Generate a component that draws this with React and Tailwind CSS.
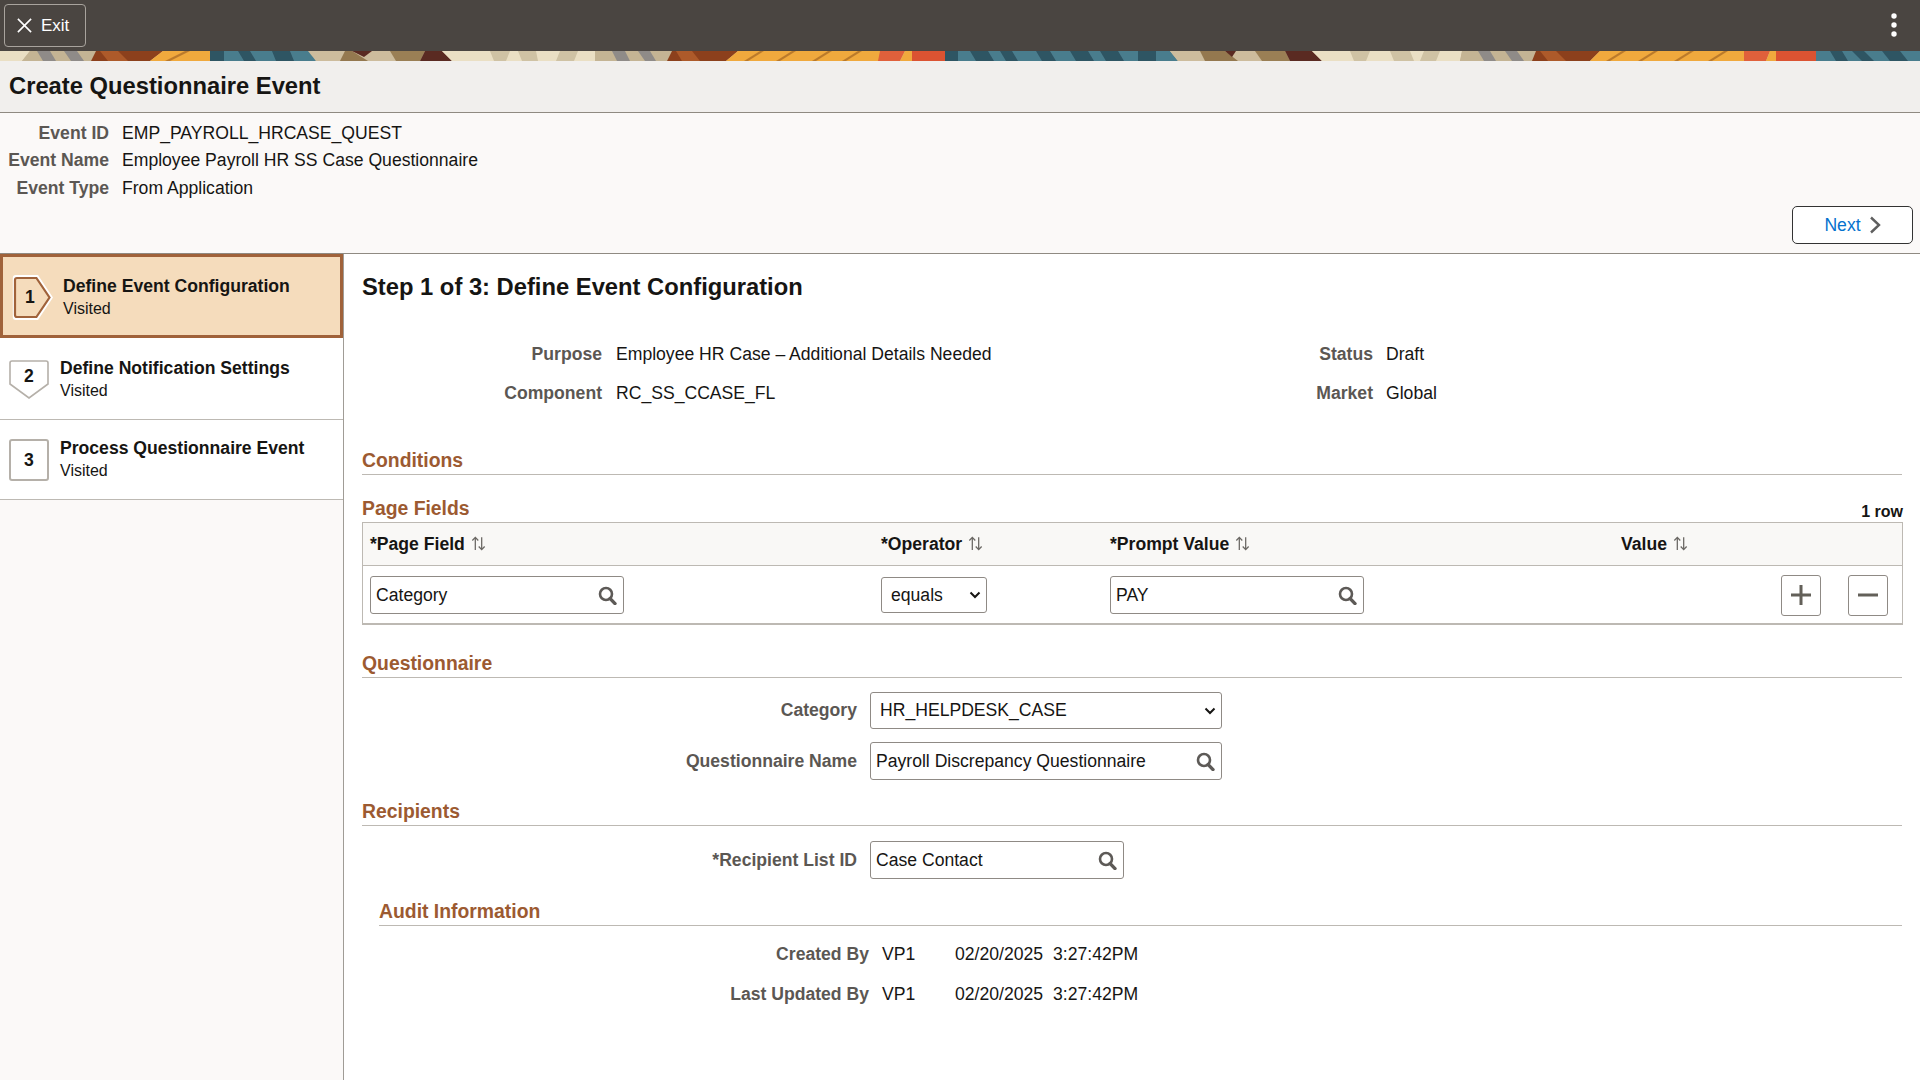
import React from "react";

const bannerShapes = [
  ["0,0 30,0 22,10 0,10", "#eadfc4"],
  ["30,0 96,0 91,10 22,10", "#c4b494"],
  ["37,0 50,0 56,10 43,10", "#8f8b88"],
  ["64,0 77,0 84,10 71,10", "#8f8b88"],
  ["96,0 163,0 150,10 91,10", "#8c401c"],
  ["100,0 118,0 128,10 108,10", "#ad5a2a"],
  ["163,0 210,0 210,10 150,10", "#f0a93c"],
  ["185,0 190,0 170,10 165,10", "#bb7a2c"],
  ["210,0 312,0 316,10 210,10", "#4a7d8d"],
  ["210,0 224,0 224,10 210,10", "#2f5563"],
  ["238,0 250,0 256,10 244,10", "#2f5563"],
  ["272,0 290,0 294,10 276,10", "#2f5563"],
  ["308,0 345,0 340,10 316,10", "#cdbc9d"],
  ["345,0 390,0 396,10 340,10", "#cdbc9d"],
  ["345,0 352,0 368,10 340,10", "#94784f"],
  ["352,0 372,0 364,6", "#5a2a22"],
  ["390,0 425,0 420,10 396,10", "#9a7f55"],
  ["425,0 442,0 452,10 420,10", "#5a2a22"],
  ["442,0 595,0 595,10 452,10", "#eadfc4"],
  ["490,0 510,0 506,10 494,10", "#cfc2a4"],
  ["518,0 536,0 538,10 522,10", "#cfc2a4"],
  ["560,0 578,0 574,10 556,10", "#cfc2a4"],
  ["595,0 672,0 667,10 595,10", "#c4b494"],
  ["612,0 625,0 630,10 617,10", "#8f8b88"],
  ["638,0 650,0 656,10 645,10", "#8f8b88"],
  ["672,0 738,0 726,10 667,10", "#8c401c"],
  ["676,0 692,0 700,10 682,10", "#ad5a2a"],
  ["738,0 880,0 880,10 726,10", "#f0a93c"],
  ["760,0 764,0 748,10 744,10", "#bb7a2c"],
  ["792,0 796,0 780,10 776,10", "#bb7a2c"],
  ["828,0 832,0 816,10 812,10", "#bb7a2c"],
  ["858,0 862,0 846,10 842,10", "#bb7a2c"],
  ["880,0 905,0 900,10 878,10", "#e0603a"],
  ["905,0 912,0 912,10 900,10", "#f0a93c"],
  ["912,0 945,0 945,10 912,10", "#db5233"],
  ["945,0 1170,0 1178,10 945,10", "#4a7d8d"],
  ["945,0 958,0 958,10 945,10", "#2f5563"],
  ["970,0 988,0 994,10 976,10", "#2f5563"],
  ["1000,0 1012,0 1018,10 1006,10", "#2f5563"],
  ["1036,0 1050,0 1056,10 1042,10", "#2f5563"],
  ["1070,0 1088,0 1094,10 1076,10", "#2f5563"],
  ["1100,0 1118,0 1124,10 1106,10", "#2f5563"],
  ["1138,0 1156,0 1156,10 1138,10", "#2f5563"],
  ["1170,0 1255,0 1262,10 1178,10", "#cdbc9d"],
  ["1200,0 1225,0 1238,10 1205,10", "#94784f"],
  ["1225,0 1236,0 1232,6", "#5a2a22"],
  ["1255,0 1285,0 1290,10 1262,10", "#9a7f55"],
  ["1285,0 1312,0 1322,10 1290,10", "#5a2a22"],
  ["1312,0 1462,0 1460,10 1322,10", "#eadfc4"],
  ["1350,0 1370,0 1366,10 1354,10", "#cfc2a4"],
  ["1390,0 1410,0 1414,10 1394,10", "#cfc2a4"],
  ["1424,0 1440,0 1436,10 1420,10", "#cfc2a4"],
  ["1462,0 1536,0 1532,10 1460,10", "#c4b494"],
  ["1478,0 1490,0 1496,10 1484,10", "#8f8b88"],
  ["1505,0 1517,0 1524,10 1512,10", "#8f8b88"],
  ["1536,0 1600,0 1590,10 1532,10", "#8c401c"],
  ["1540,0 1556,0 1566,10 1548,10", "#ad5a2a"],
  ["1600,0 1744,0 1744,10 1590,10", "#f0a93c"],
  ["1622,0 1626,0 1610,10 1606,10", "#bb7a2c"],
  ["1654,0 1658,0 1642,10 1638,10", "#bb7a2c"],
  ["1690,0 1694,0 1678,10 1674,10", "#bb7a2c"],
  ["1724,0 1728,0 1712,10 1708,10", "#bb7a2c"],
  ["1744,0 1770,0 1766,10 1744,10", "#e0603a"],
  ["1770,0 1776,0 1776,10 1766,10", "#f0a93c"],
  ["1776,0 1816,0 1816,10 1776,10", "#db5233"],
  ["1816,0 1920,0 1920,10 1816,10", "#4a7d8d"],
  ["1830,0 1842,0 1848,10 1836,10", "#2f5563"],
  ["1852,0 1864,0 1874,10 1862,10", "#2f5563"],
  ["1882,0 1900,0 1908,10 1890,10", "#2f5563"],
];

function SearchIcon() {
  return (
    <svg width="19" height="19" viewBox="0 0 19 19" className="shrink-0">
      <circle cx="8" cy="8" r="6" fill="none" stroke="#5d5a57" strokeWidth="2.6" />
      <path d="M12.2 12.6 L17 17.6" stroke="#5d5a57" strokeWidth="3.4" strokeLinecap="round" />
    </svg>
  );
}

function SortIcon() {
  return (
    <svg width="17" height="17" viewBox="0 0 16 16" className="ml-[5px]">
      <path d="M5 14V2.5M2.2 5.2 5 2.2l2.8 3M11 2v11.5M8.2 10.8 11 13.8l2.8-3" fill="none" stroke="#6b6864" strokeWidth="1.2" />
    </svg>
  );
}

function Lookup({ value, width }) {
  return (
    <div className={`flex items-center h-[38px] pl-[5px] pr-[6px] bg-white border border-[#8f8a85] rounded-[3px] ${width}`}>
      <input readOnly defaultValue={value} className="flex-1 min-w-0 bg-transparent outline-none text-[17.6px] text-[#161513]" />
      <SearchIcon />
    </div>
  );
}

function Select({ value, width, height }) {
  return (
    <div className={`relative ${width} ${height}`}>
      <select defaultValue={value} className="appearance-none w-full h-full pl-[9px] bg-white border border-[#8f8a85] rounded-[3px] text-[17.6px]">
        <option>{value}</option>
      </select>
      <svg width="12" height="8" viewBox="0 0 12 8" className="absolute right-[6px] top-1/2 -translate-y-1/2 pointer-events-none">
        <path d="M1.5 1.5 6 6l4.5-4.5" fill="none" stroke="#161513" strokeWidth="2" />
      </svg>
    </div>
  );
}

function SectionHead({ children, className = "" }) {
  return (
    <div className={`h-[28px] border-b border-[#bdb9b3] text-[19.36px] leading-[27px] font-bold text-[#9c5a31] ${className}`}>
      {children}
    </div>
  );
}

function FieldRow({ label, children, className = "" }) {
  return (
    <div className={`flex items-center gap-[13px] ${className}`}>
      <div className="w-[495px] text-right font-bold text-[#5b5753]">{label}</div>
      {children}
    </div>
  );
}

function ColHead({ label, className }) {
  return (
    <div className={`flex items-center font-bold text-[#161513] ${className}`}>
      {label}
      <SortIcon />
    </div>
  );
}

function SquareBtn({ d }) {
  return (
    <button className="w-[40px] h-[41px] flex items-center justify-center border border-[#8f8a85] rounded-[3px] bg-white">
      <svg width="22" height="22" viewBox="0 0 22 22">
        <path d={d} stroke="#636059" strokeWidth="3" fill="none" />
      </svg>
    </button>
  );
}

function AuditRow({ label }) {
  return (
    <div className="h-[40px] flex items-center ml-[17px]">
      <div className="w-[490px] text-right font-bold text-[#5b5753]">{label}</div>
      <div className="ml-[13px] w-[73px]">VP1</div>
      <div className="w-[98px]">02/20/2025</div>
      <div>3:27:42PM</div>
    </div>
  );
}

function StepText({ title }) {
  return (
    <div className="flex flex-col">
      <div className="font-bold leading-[22px] text-[#161513]">{title}</div>
      <div className="text-[16px] leading-[24px] text-[#161513]">Visited</div>
    </div>
  );
}

export default function App() {
  return (
    <div className="w-[1920px] h-screen overflow-hidden flex flex-col bg-white text-[17.6px] text-[#161513] font-['Liberation_Sans',Arial,sans-serif]">
      <div className="h-[51px] shrink-0 bg-[#4a4541] flex items-center justify-between pl-[4px] pr-[23px]">
        <button className="w-[82px] h-[43px] flex items-center pl-[11px] gap-[8px] border border-[#a8a39d] rounded-[4px] text-white text-[17px]">
          <svg width="17" height="17" viewBox="0 0 18 18">
            <path d="M2 2l14 14M16 2 2 16" stroke="#fff" strokeWidth="1.7" />
          </svg>
          Exit
        </button>
        <svg width="6" height="26" viewBox="0 0 6 26">
          <circle cx="3" cy="3" r="2.7" fill="#fff" />
          <circle cx="3" cy="12" r="2.7" fill="#fff" />
          <circle cx="3" cy="21" r="2.7" fill="#fff" />
        </svg>
      </div>
      <svg className="block shrink-0" width="1920" height="10" viewBox="0 0 1920 10">
        <filter id="soft" x="0" y="0" width="1" height="1">
          <feGaussianBlur stdDeviation="0.7" />
        </filter>
        <rect width="1920" height="10" fill="#cdbc9d" />
        <g filter="url(#soft)">
          {bannerShapes.map(([points, fill], i) => (
            <polygon key={i} points={points} fill={fill} />
          ))}
        </g>
      </svg>
      <div className="h-[52px] shrink-0 flex items-center pl-[9px] pb-[2px] bg-[#f1efed] border-b border-[#8f8a82] text-[23.76px] font-bold">
        Create Questionnaire Event
      </div>
      <div className="h-[141px] shrink-0 flex justify-between items-end pb-[9px] pr-[7px] bg-[#fbf9f8] border-b border-[#8f8a82]">
        <div className="self-start mt-[7px] grid grid-cols-[109px_auto] gap-x-[13px] grid-rows-[27px_27px_28px] items-center">
          <div className="text-right font-bold text-[#5b5753]">Event ID</div>
          <div>EMP_PAYROLL_HRCASE_QUEST</div>
          <div className="text-right font-bold text-[#5b5753]">Event Name</div>
          <div>Employee Payroll HR SS Case Questionnaire</div>
          <div className="text-right font-bold text-[#5b5753]">Event Type</div>
          <div>From Application</div>
        </div>
        <button className="w-[121px] h-[38px] flex items-center justify-center gap-[8px] bg-white border border-[#333] rounded-[5px] text-[#0572ce]">
          Next
          <svg width="12" height="18" viewBox="0 0 12 18">
            <path d="M2 1.5 10 9l-8 7.5" fill="none" stroke="#5f5f5f" strokeWidth="2.4" />
          </svg>
        </button>
      </div>
      <div className="flex-1 flex min-h-0">
        <div className="w-[344px] shrink-0 bg-[#fbf9f8] border-r border-[#a09c96]">
          <div className="h-[84px] flex items-center pl-[9px] pt-[4px] gap-[9px] bg-[#f5dcbc] border-[3px] border-[#a0623a]">
            <svg width="42" height="47" viewBox="0 0 42 47" className="-mt-[2px]">
              <path d="M.8 4a3 3 0 0 1 3-3H26L41 23.5 26 46H3.8a3 3 0 0 1-3-3Z" fill="#fff" />
              <path d="M3 6a2 2 0 0 1 2-2h19.4L37.5 23.5 24.4 43H5a2 2 0 0 1-2-2Z" fill="#f5dcbc" stroke="#a0623a" strokeWidth="2.2" />
              <text x="18" y="28.5" textAnchor="middle" fontSize="17.6" fontWeight="700" fill="#161513">1</text>
            </svg>
            <StepText title="Define Event Configuration" />
          </div>
          <div className="h-[82px] flex items-center pl-[9px] pt-[2px] gap-[11px] bg-white border-b border-[#bdb9b3]">
            <svg width="40" height="39" viewBox="0 0 40 39">
              <path d="M1 3a2 2 0 0 1 2-2h34a2 2 0 0 1 2 2v21l-19 14L1 24Z" fill="#fff" stroke="#b5b0a9" strokeWidth="1.6" />
              <text x="20" y="22" textAnchor="middle" fontSize="17.6" fontWeight="700" fill="#161513">2</text>
            </svg>
            <StepText title="Define Notification Settings" />
          </div>
          <div className="h-[80px] flex items-center pl-[9px] pt-[1px] gap-[11px] bg-white border-b border-[#bdb9b3]">
            <div className="w-[40px] h-[42px] flex items-center justify-center border-2 border-[#b5b0a9] rounded-[3px] font-bold">3</div>
            <StepText title="Process Questionnaire Event" />
          </div>
        </div>

        <div className="flex-1 min-w-0 pl-[18px] pr-[18px]">
          <div className="h-[64px] pt-[2px] flex items-center text-[23.76px] font-bold">Step 1 of 3: Define Event Configuration</div>
          <div className="mt-[17px] grid grid-cols-[240px_640px_103px_auto] gap-x-[14px] auto-rows-[39px] items-center">
            <div className="text-right font-bold text-[#5b5753]">Purpose</div>
            <div>Employee HR Case – Additional Details Needed</div>
            <div className="text-right font-bold text-[#5b5753]">Status</div>
            <div className="-ml-px">Draft</div>
            <div className="text-right font-bold text-[#5b5753]">Component</div>
            <div>RC_SS_CCASE_FL</div>
            <div className="text-right font-bold text-[#5b5753]">Market</div>
            <div className="-ml-px">Global</div>
          </div>

          <SectionHead className="mt-[34px]">Conditions</SectionHead>

          <div className="mt-[20px] h-[27px] -mr-px flex justify-between items-end">
            <div className="h-[27px] text-[19.36px] leading-[27px] font-bold text-[#9c5a31]">Page Fields</div>
            <div className="text-[16px] leading-[20px] font-bold">1 row</div>
          </div>
          <div className="h-[103px] -mr-px border border-b-2 border-[#bdb9b3]">
            <div className="h-[43px] flex items-center pl-[7px] bg-[#f9f8f6] border-b border-[#bdb9b3]">
              <ColHead label="*Page Field" className="w-[511px]" />
              <ColHead label="*Operator" className="w-[229px]" />
              <ColHead label="*Prompt Value" className="w-[511px]" />
              <ColHead label="Value" className="" />
            </div>
            <div className="h-[57px] pt-[1px] flex items-center pl-[7px] pr-[14px]">
              <div className="w-[511px]"><Lookup value="Category" width="w-[254px]" /></div>
              <div className="w-[229px]">
                <Select value="equals" width="w-[106px]" height="h-[36px]" />
              </div>
              <div className="flex-1"><Lookup value="PAY" width="w-[254px]" /></div>
              <div className="flex gap-[27px]">
                <SquareBtn d="M11 1v20M1 11h20" />
                <SquareBtn d="M1 11h20" />
              </div>
            </div>
          </div>

          <SectionHead className="mt-[25px]">Questionnaire</SectionHead>
          <FieldRow label="Category" className="mt-[14px]">
            <Select value="HR_HELPDESK_CASE" width="w-[352px]" height="h-[37px]" />
          </FieldRow>
          <FieldRow label="Questionnaire Name" className="mt-[13px]">
            <Lookup value="Payroll Discrepancy Questionnaire" width="w-[352px]" />
          </FieldRow>

          <SectionHead className="mt-[18px]">Recipients</SectionHead>
          <FieldRow label="*Recipient List ID" className="mt-[15px]">
            <Lookup value="Case Contact" width="w-[254px]" />
          </FieldRow>

          <SectionHead className="mt-[19px] ml-[17px]">Audit Information</SectionHead>
          <div className="mt-[8px]">
            <AuditRow label="Created By" />
            <AuditRow label="Last Updated By" />
          </div>
        </div>
      </div>
    </div>
  );
}
